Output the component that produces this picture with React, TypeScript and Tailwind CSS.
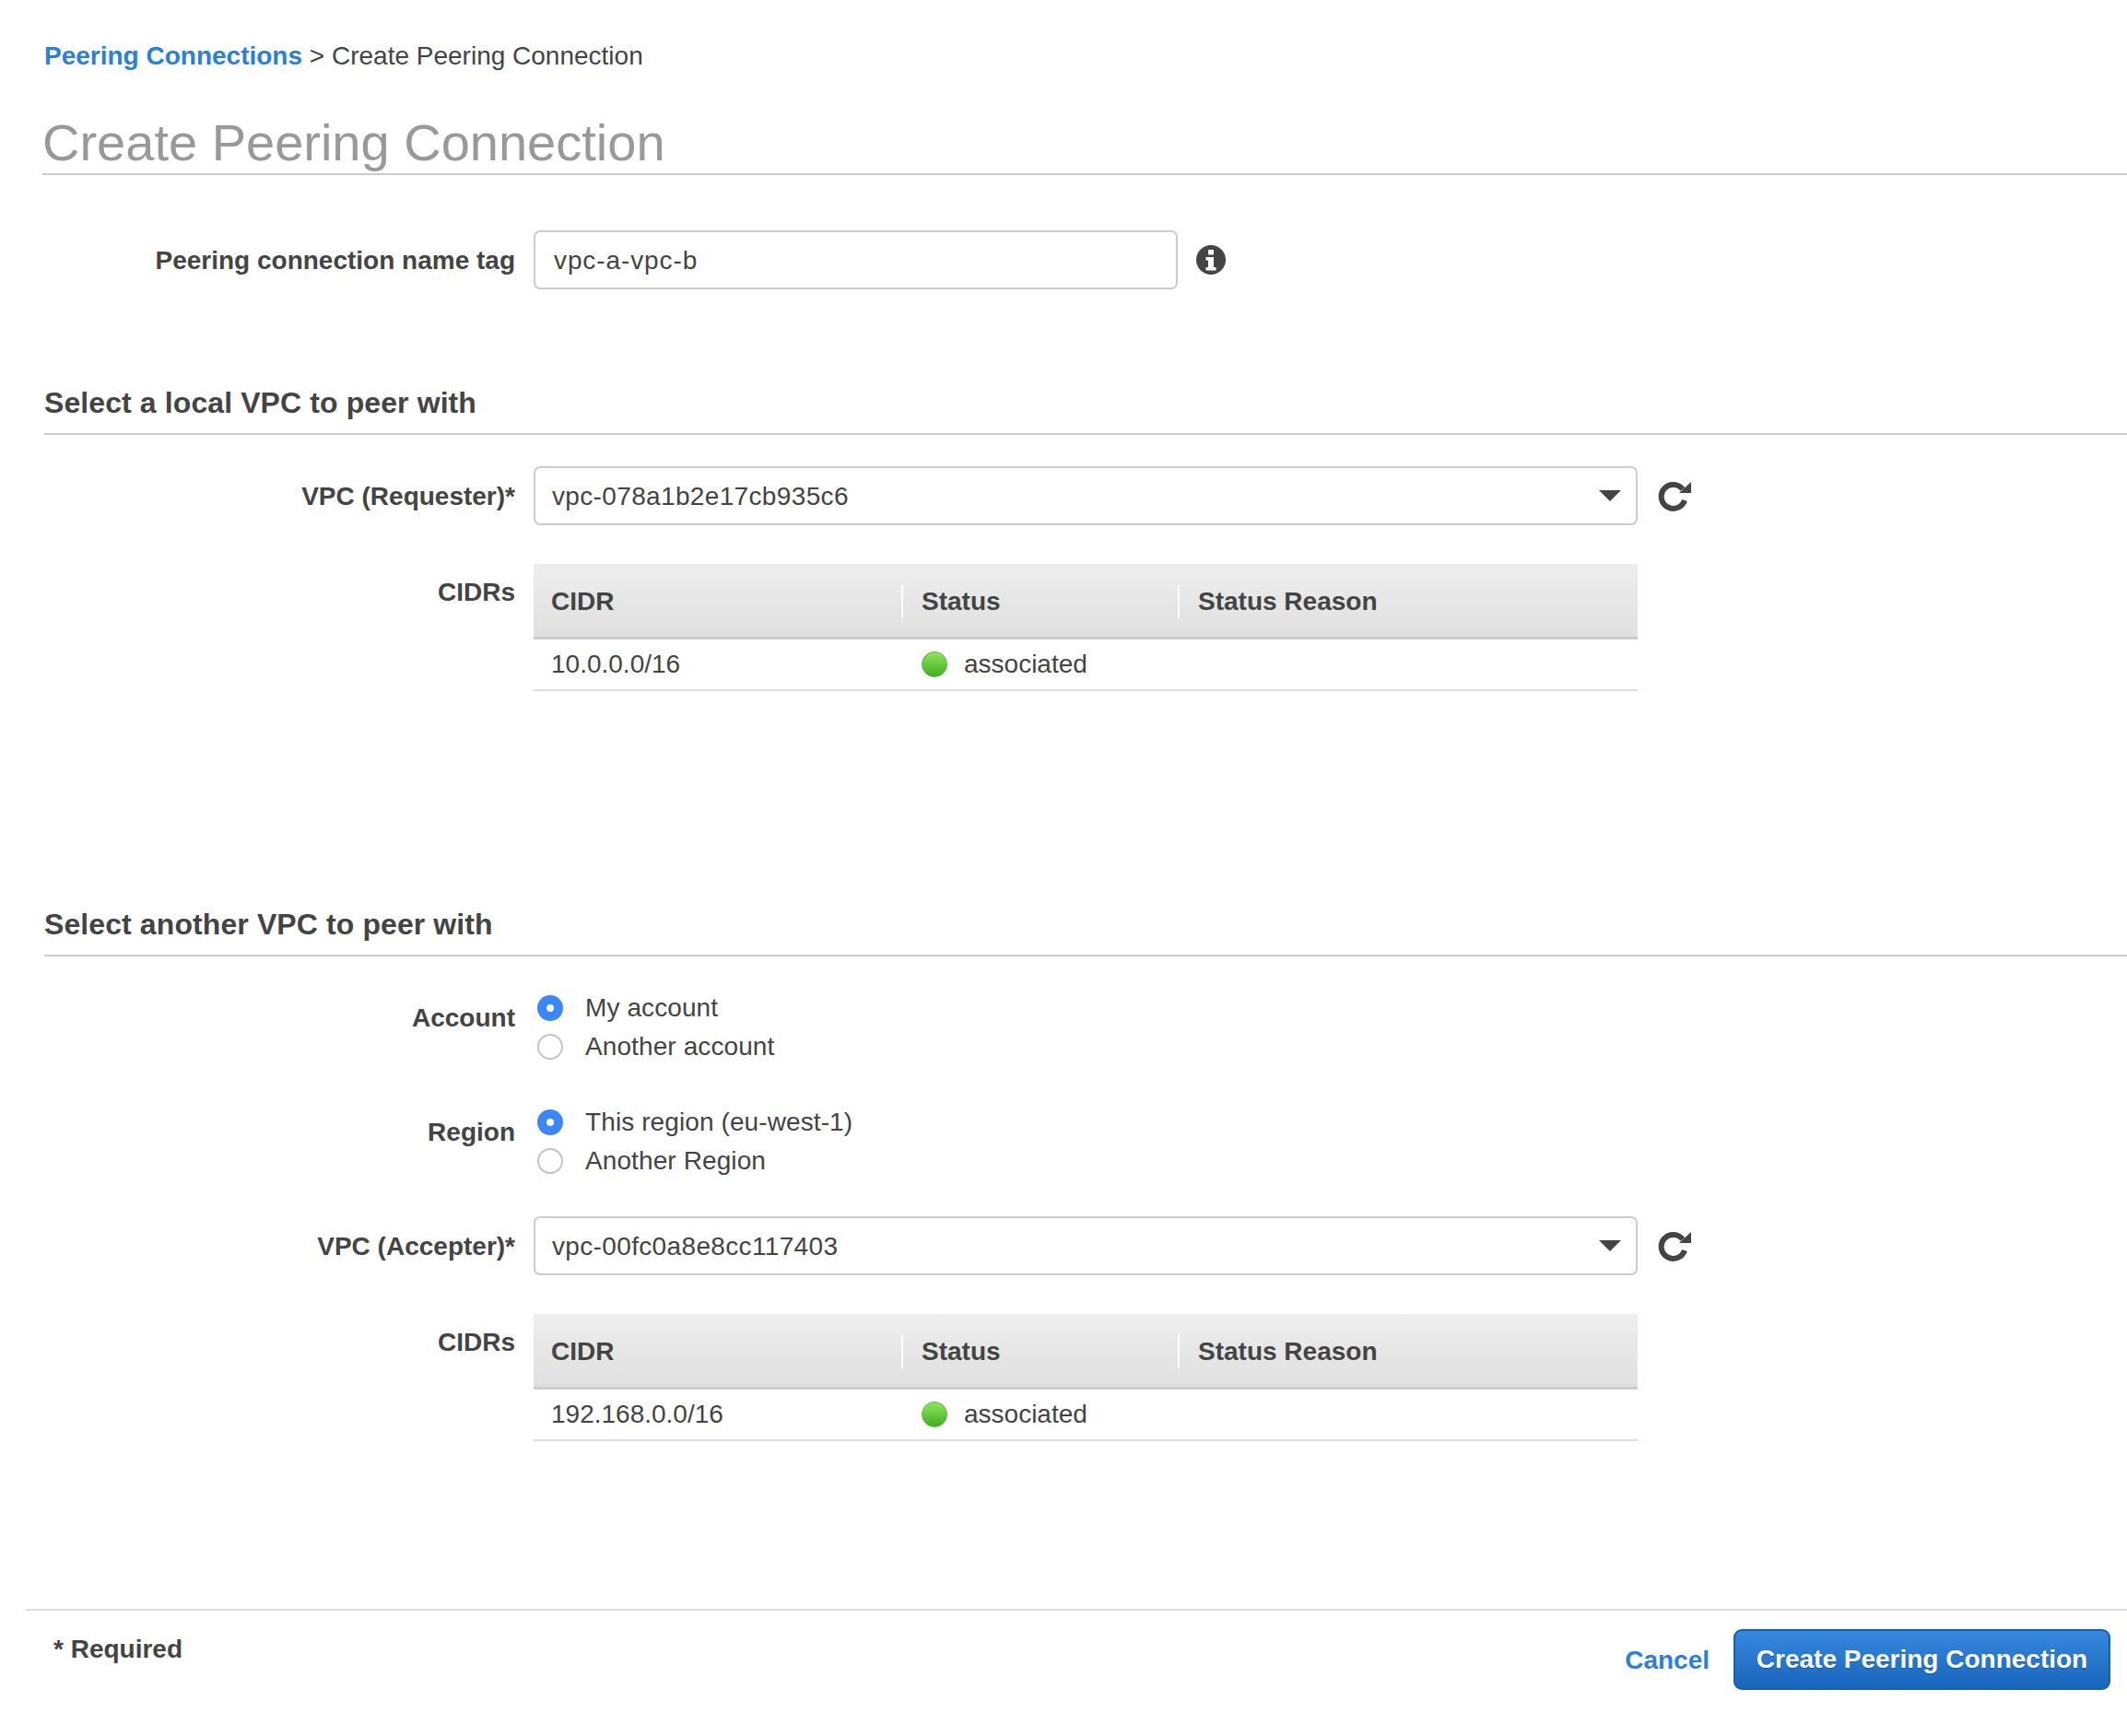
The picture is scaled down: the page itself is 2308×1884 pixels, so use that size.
import React from "react";

interface CidrRow {
  cidr: string;
  status: string;
}

const InfoIcon = () => (
  <svg viewBox="0 0 32 32" className="ml-[20px] w-[32px] h-[32px] text-[#444444]">
    <circle cx="16" cy="16" r="16" fill="currentColor" />
    <rect x="13" y="5" width="6" height="5.500" rx="1" fill="#ffffff" />
    <path d="M10.500 13h8.500v11h2.500v3.500h-11V24H13v-7.500h-2.500z" fill="#ffffff" />
  </svg>
);

const RefreshIcon = () => (
  <svg viewBox="0 0 36 34" className="ml-[22px] mt-[2px] w-[36px] h-[34px] text-[#444444]">
    <path d="M29 21A13 13 0 1 1 27 9" fill="none" stroke="currentColor" strokeWidth="6" />
    <path d="M36 1v12H23z" fill="currentColor" />
  </svg>
);

const SelectBox = ({ value }: { value: string }) => (
  <div className="flex items-center">
    <div className="w-[1198px] h-[64px] border-2 border-[#cccccc] rounded-[7px] flex items-center justify-between pl-[18px] pr-[16px] bg-white">
      <span className="tracking-[0.35px] pt-[1px]">{value}</span>
      <span className="w-0 h-0 border-l-[12px] border-r-[12px] border-t-[12px] border-l-transparent border-r-transparent border-t-[#444444]" />
    </div>
    <RefreshIcon />
  </div>
);

const CidrTable = ({ row }: { row: CidrRow }) => (
  <div className="w-[1198px]">
    <div className="h-[82px] pt-[2px] flex items-center font-bold border-b-[3px] border-[#cccccc] bg-gradient-to-b from-[#eeeeee] to-[#e0e0e0]">
      <div className="w-[399px] pl-[19px]">CIDR</div>
      <div className="w-[300px] h-[36px] pl-[20px] border-l-2 border-white flex items-center">Status</div>
      <div className="h-[36px] pl-[20px] border-l-2 border-white flex items-center">Status Reason</div>
    </div>
    <div className="h-[56px] flex items-center border-b-2 border-[#dddddd]">
      <div className="w-[402px] pl-[19px]">{row.cidr}</div>
      <div className="flex items-center pl-[19px]">
        <span className="w-[28px] h-[28px] rounded-full bg-gradient-to-b from-[#8ee45f] to-[#3fae1c] border border-[#58b838]" />
        <span className="ml-[18px]">{row.status}</span>
      </div>
    </div>
  </div>
);

const Radio = ({ checked, label }: { checked?: boolean; label: string }) => (
  <div className="h-[42px] flex items-center pl-[4px]">
    {checked ? (
      <span className="w-[28px] h-[28px] rounded-full bg-[#3b87fa] flex items-center justify-center">
        <span className="w-[8px] h-[8px] rounded-full bg-white" />
      </span>
    ) : (
      <span className="w-[28px] h-[28px] rounded-full border-2 border-[#c4c4c4] bg-white" />
    )}
    <span className="ml-[24px] tracking-[0.1px]">{label}</span>
  </div>
);

const FormRow = ({ label, labelClass, children, className = "" }: { label: string; labelClass: string; children: React.ReactNode; className?: string }) => (
  <div className={"flex " + className}>
    <div className={"w-[559px] text-right font-bold " + labelClass}>{label}</div>
    <div className="ml-[20px]">{children}</div>
  </div>
);

export default function App() {
  return (
    <div
      className="w-[2308px] h-[1884px] bg-white text-[#444444] text-[28px] leading-[36px] overflow-hidden"
      style={{ fontFamily: '"Liberation Sans", Arial, sans-serif' }}
    >
      {/* breadcrumb */}
      <div className="pt-[43px] pl-[48px]">
        <span className="font-bold text-[#2b7fd8]">Peering Connections</span>
        <span> &gt; Create Peering Connection</span>
      </div>

      {/* title */}
      <div className="mt-[44px] ml-[46px] pb-[1px] border-b-2 border-[#cccccc]">
        <h1 className="text-[56px] leading-[64px] text-[#999999]">Create Peering Connection</h1>
      </div>

      {/* name tag */}
      <div className="mt-[60px] flex items-center">
        <div className="w-[559px] text-right font-bold pt-[2px]">Peering connection name tag</div>
        <div className="ml-[20px] w-[699px] h-[64px] pt-[2px] border-2 border-[#cccccc] rounded-[7px] flex items-center pl-[20px] tracking-[0.9px]">vpc-a-vpc-b</div>
        <InfoIcon />
      </div>

      {/* local VPC */}
      <div className="mt-[105px] ml-[48px] pb-[15px] border-b-2 border-[#cccccc] font-bold text-[32px] tracking-[0.1px]">Select a local VPC to peer with</div>
      <FormRow label="VPC (Requester)*" labelClass="pt-[15px]" className="mt-[34px]">
        <SelectBox value="vpc-078a1b2e17cb935c6" />
      </FormRow>
      <FormRow label="CIDRs" labelClass="pt-[13px]" className="mt-[42px]">
        <CidrTable row={{ cidr: "10.0.0.0/16", status: "associated" }} />
      </FormRow>

      {/* other VPC */}
      <div className="mt-[235px] ml-[48px] pb-[15px] border-b-2 border-[#cccccc] font-bold text-[32px] tracking-[0.1px]">Select another VPC to peer with</div>
      <FormRow label="Account" labelClass="pt-[14px]" className="mt-[35px]">
        <Radio checked label="My account" />
        <Radio label="Another account" />
      </FormRow>
      <FormRow label="Region" labelClass="pt-[14px]" className="mt-[40px]">
        <Radio checked label="This region (eu-west-1)" />
        <Radio label="Another Region" />
      </FormRow>
      <FormRow label="VPC (Accepter)*" labelClass="pt-[15px]" className="mt-[39px]">
        <SelectBox value="vpc-00fc0a8e8cc117403" />
      </FormRow>
      <FormRow label="CIDRs" labelClass="pt-[13px]" className="mt-[42px]">
        <CidrTable row={{ cidr: "192.168.0.0/16", status: "associated" }} />
      </FormRow>

      {/* footer */}
      <div className="mt-[182px] ml-[28px] border-t-2 border-[#dddddd] pt-[20px] pr-[18px] flex justify-between">
        <div className="font-bold pl-[30px] pt-[4px]">* Required</div>
        <div className="flex items-center">
          <span className="font-bold text-[#2b7fd8] pt-[2px]">Cancel</span>
          <button className="ml-[26px] w-[409px] h-[66px] rounded-[9px] border-2 border-[#1261b5] bg-gradient-to-b from-[#3688de] to-[#1766bb] text-white font-bold [text-shadow:0_1px_0_#0f5aa8]">
            Create Peering Connection
          </button>
        </div>
      </div>
    </div>
  );
}
